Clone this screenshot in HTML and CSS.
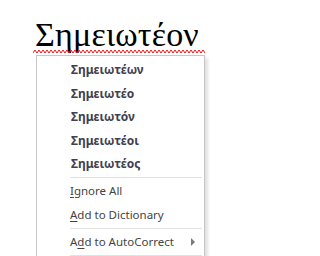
FILE: index.html
```html
<!DOCTYPE html>
<html>
<head>
<meta charset="utf-8">
<link rel="stylesheet" href="styles.css">
</head>
<body>
<div class="doc">
  <div class="word">
    <span>Σημειωτέον</span>
    <svg class="squiggle" width="174" height="5" viewBox="0 0 174 5">
      <polyline fill="none" stroke="#e8141b" stroke-width="1" points="0,4 2,1 4,4 6,1 8,4 10,1 12,4 14,1 16,4 18,1 20,4 22,1 24,4 26,1 28,4 30,1 32,4 34,1 36,4 38,1 40,4 42,1 44,4 46,1 48,4 50,1 52,4 54,1 56,4 58,1 60,4 62,1 64,4 66,1 68,4 70,1 72,4 74,1 76,4 78,1 80,4 82,1 84,4 86,1 88,4 90,1 92,4 94,1 96,4 98,1 100,4 102,1 104,4 106,1 108,4 110,1 112,4 114,1 116,4 118,1 120,4 122,1 124,4 126,1 128,4 130,1 132,4 134,1 136,4 138,1 140,4 142,1 144,4 146,1 148,4 150,1 152,4 154,1 156,4 158,1 160,4 162,1 164,4 166,1 168,4 170,1 172,4"/>
    </svg>
  </div>
  <div class="menu">
    <div class="item sugg">Σημειωτέων</div>
    <div class="item sugg">Σημειωτέο</div>
    <div class="item sugg">Σημειωτόν</div>
    <div class="item sugg">Σημειωτέοι</div>
    <div class="item sugg">Σημειωτέος</div>
    <div class="sep"></div>
    <div class="item"><u>I</u>gnore All</div>
    <div class="item"><u>A</u>dd to Dictionary</div>
    <div class="sep"></div>
    <div class="item sub">A<u>d</u>d to AutoCorrect<span class="arrow"></span></div>
    <div class="sep"></div>
  </div>
</div>
</body>
</html>
```
FILE: styles.css
```css
html, body {
  margin: 0;
  padding: 0;
  background: #ffffff;
  overflow: hidden;
}
.doc {
  width: 237px;
  height: 256px;
}
.word {
  position: relative;
  height: 55px;
  padding-left: 35px;
  box-sizing: border-box;
  font-family: "Liberation Serif", "DejaVu Serif", serif;
  font-size: 34px;
  line-height: 34px;
  letter-spacing: 0.2px;
  padding-top: 18px;
  color: #000;
  white-space: nowrap;
}
.squiggle {
  position: absolute;
  left: 33px;
  top: 49px;
  display: block;
}
.menu {
  position: relative;
  margin-left: 36px;
  width: 169px;
  box-sizing: border-box;
  border: 1px solid #c6c6c6;
  border-bottom: none;
  background: #fff;
  padding-top: 2px;
  height: 201px;
  box-shadow: 3px 3px 3px rgba(0,0,0,0.12);
  font-family: "Noto Sans", "Open Sans", sans-serif;
  font-size: 11.5px;
  color: #444;
}
.item {
  height: 23.5px;
  line-height: 23.5px;
  padding-left: 33px;
  white-space: nowrap;
  display: flex;
  align-items: center;
}
.item u {
  text-underline-offset: 2px;
}
.sugg {
  font-weight: bold;
  font-size: 12px;
  color: #404050;
  padding-left: 34px;
}
.sep {
  height: 1px;
  background: #e2e2e2;
  margin: 1.5px 2px 1px 33px;
}
.sub {
  position: relative;
}
.arrow {
  position: absolute;
  left: 154px;
  top: 8px;
  width: 0;
  height: 0;
  border-top: 4px solid transparent;
  border-bottom: 4px solid transparent;
  border-left: 4px solid #7a7a7a;
}
```
